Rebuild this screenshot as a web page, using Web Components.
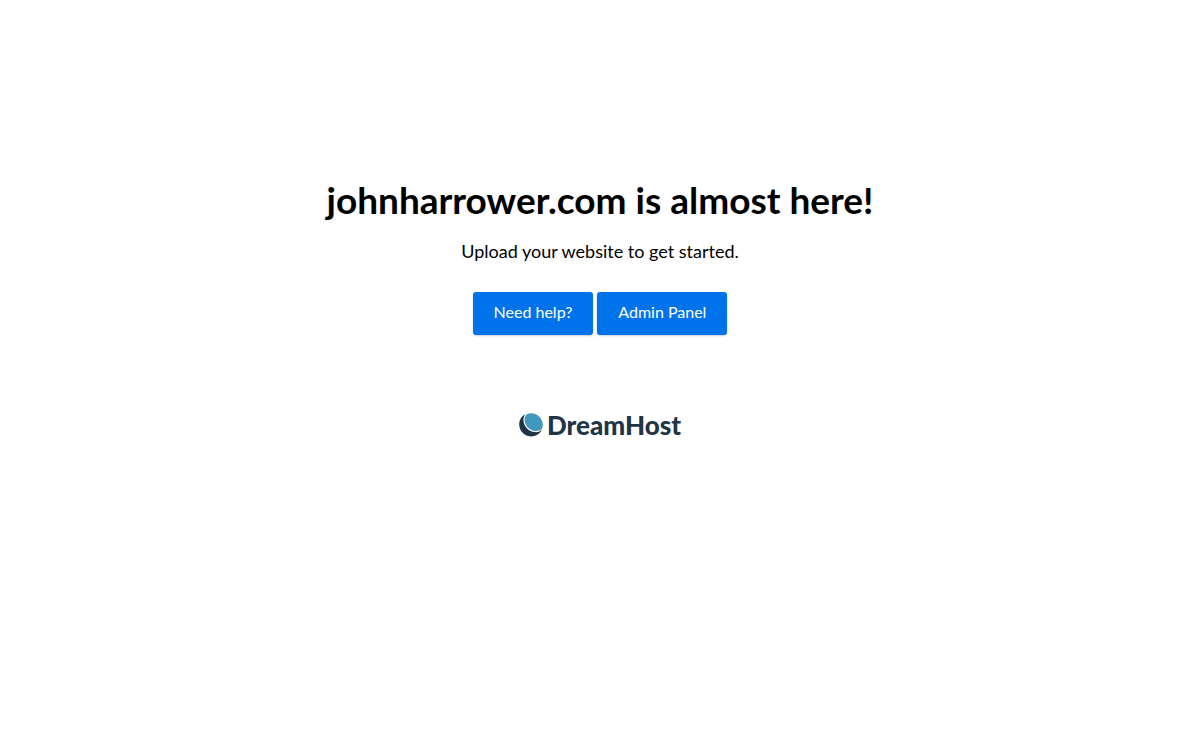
<!DOCTYPE html>
<html lang="en">
<head>
  <meta charset="utf-8">
  <meta name="viewport" content="width=device-width, initial-scale=1">
  <title>johnharrower.com is almost here!</title>
  <style>
    body {
      margin: 0;
      background: #fff;
      color: #000;
      font-family: Lato, "Liberation Sans", sans-serif;
    }
  </style>
</head>
<body>
  <dh-landing>
    <span slot="title">johnharrower.com is almost here!</span>
    <span slot="message">Upload your website to get started.</span>
    <dh-button slot="actions">Need help?</dh-button>
    <dh-button slot="actions">Admin Panel</dh-button>
    <dh-logo slot="footer">DreamHost</dh-logo>
  </dh-landing>

  <script>
    /* ------------- BUTTON ------------- */
    const template_button = document.createElement("template");

    template_button.innerHTML = /*html*/`
      <style>
        :host {
          display: block;
        }

        button {
          display: block;
          margin: 0;
          padding: 10px 21px 13px;
          border: 0;
          border-radius: 3px;
          background: #0073ec;
          box-shadow: 0 1px 2px rgba(0, 0, 0, 0.2);
          color: #fff;
          font-family: inherit;
          font-size: 16px;
          line-height: 20px;
          cursor: pointer;
        }

        button:hover {
          background: #0062ca;
        }
      </style>

      <button type="button"><slot></slot></button>
    `

    class DhButton extends HTMLElement {
      constructor() {
        super();
        const shadow = this.attachShadow({ mode: "open" });
        shadow.append(template_button.content.cloneNode(true));
      }
    }

    customElements.define("dh-button", DhButton);

    /* -------------- LOGO -------------- */
    const template_logo = document.createElement("template");

    template_logo.innerHTML = /*html*/`
      <style>
        :host {
          display: flex;
          align-items: center;
          gap: 4px;
          color: #1f3546;
          font-size: 26px;
          font-weight: 900;
          line-height: 24px;
        }

        svg {
          display: block;
          width: 24px;
          height: 24px;
        }
      </style>

      <svg viewBox="0 0 24 24" aria-hidden="true">
        <path fill="#1f3546" d="M6.2 1.2C2.6 3 0.2 6.9 0.2 11.3C0.2 18 5.4 23.4 12 23.4C16.800 23.4 21 20.7 22.9 16.7C20.6 18.7 18.5 19.3 16 19.1C9.6 18.6 4.5 13.3 4.5 7C4.5 4.8 5 2.9 6.2 1.2Z"/>
        <path fill="#4297bf" d="M7.5 1.4C9 0.7 10.5 0.3 12.2 0.3C18.5 0.3 23.7 5.5 23.7 11.9C23.7 13.3 23.4 14.6 23 15.8C21.3 17.4 19 18.2 16.5 18C10.6 17.6 5.6 12.6 5.6 6.7C5.6 4.7 6.2 2.8 7.5 1.4Z"/>
      </svg>
      <slot></slot>
    `

    class DhLogo extends HTMLElement {
      constructor() {
        super();
        const shadow = this.attachShadow({ mode: "open" });
        shadow.append(template_logo.content.cloneNode(true));
      }
    }

    customElements.define("dh-logo", DhLogo);

    /* ------------- LANDING ------------ */
    const template_landing = document.createElement("template");

    template_landing.innerHTML = /*html*/`
      <style>
        :host {
          display: block;
          padding: 180px 20px 40px;
        }

        main {
          display: flex;
          flex-direction: column;
          align-items: center;
          text-align: center;
        }

        h1 {
          margin: 0 0 20px;
          font-size: 37px;
          font-weight: 700;
          line-height: 40px;
        }

        p {
          margin: 0 0 30px;
          font-size: 18px;
          line-height: 22px;
        }

        .actions {
          display: flex;
          flex-wrap: wrap;
          justify-content: center;
          gap: 4px;
          margin-bottom: 78px;
        }
      </style>

      <main>
        <h1><slot name="title"></slot></h1>
        <p><slot name="message"></slot></p>
        <div class="actions"><slot name="actions"></slot></div>
        <slot name="footer"></slot>
      </main>
    `

    class DhLanding extends HTMLElement {
      constructor() {
        super();
        const shadow = this.attachShadow({ mode: "open" });
        shadow.append(template_landing.content.cloneNode(true));
      }
    }

    customElements.define("dh-landing", DhLanding);
  </script>
</body>
</html>
